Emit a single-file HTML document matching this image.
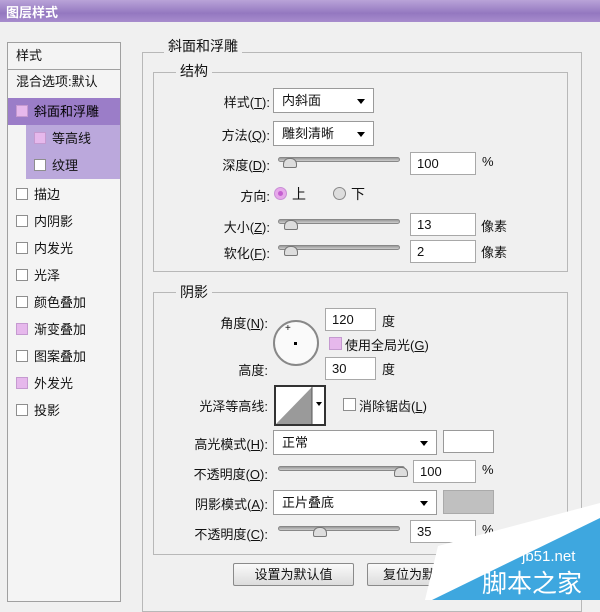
<!DOCTYPE html>
<html><head><meta charset="utf-8"><style>
*{margin:0;padding:0;box-sizing:border-box}
body{width:600px;height:600px;overflow:hidden;background:#f0f0f0;font-family:"Liberation Sans","Noto Sans CJK SC",sans-serif;font-size:13px;color:#111;position:relative}
.a{position:absolute;white-space:nowrap}
.title{left:0;top:0;width:600px;height:22px;background:linear-gradient(#b9a3d8,#9478c0 60%,#a78ccd);color:#fff;font-weight:bold;padding:2px 6px;font-size:13px}
.lp{left:7px;top:42px;width:114px;height:560px;border:1px solid #a0a0a0;background:#f4f4f4}
.row{left:8px;width:112px;height:27px;line-height:27px;padding-left:8px}
.cb{display:inline-block;width:12px;height:12px;border:1px solid #8e8e8e;background:#fff;vertical-align:-1px;margin-right:6px}
.cbp{background:#e6b8ec;border-color:#c59ad0}
.grp{border:1px solid #b8b8b8}
.lg{background:#f0f0f0;padding:0 4px}
.inp{background:#fff;border:1px solid #a8a8a8;height:23px;line-height:21px;padding-left:6px}
.dd{background:#fff;border:1px solid #9a9a9a;height:25px;line-height:23px;padding-left:8px}
.dd:after{content:"";position:absolute;right:8px;top:10px;border-left:4px solid transparent;border-right:4px solid transparent;border-top:5px solid #000}
.tr{height:5px;background:linear-gradient(#999,#ccc);border-radius:3px;border:1px solid #888}
.th{width:14px;height:10px;background:#ddd;border:1px solid #777;border-radius:6px 6px 2px 2px}
.lbl{text-align:right;width:120px}
.btn{border:1px solid #8a8a8a;background:linear-gradient(#fafafa,#dcdcdc);height:23px;line-height:21px;text-align:center;border-radius:2px}
</style></head><body>
<div class="a title">图层样式</div>

<div class="a lp"></div>
<div class="a" style="left:8px;top:69px;width:112px;border-top:1px solid #a0a0a0"></div>
<div class="a row" style="top:42px">样式</div>
<div class="a row" style="top:68px">混合选项:默认</div>
<div class="a row" style="top:98px;background:#9b7dc8;color:#000"><span class="cb cbp"></span>斜面和浮雕</div>
<div class="a row" style="top:125px;left:26px;width:94px;background:#bba8dc"><span class="cb cbp"></span>等高线</div>
<div class="a row" style="top:152px;left:26px;width:94px;background:#bba8dc"><span class="cb"></span>纹理</div>
<div class="a row" style="top:181px"><span class="cb"></span>描边</div>
<div class="a row" style="top:208px"><span class="cb"></span>内阴影</div>
<div class="a row" style="top:235px"><span class="cb"></span>内发光</div>
<div class="a row" style="top:262px"><span class="cb"></span>光泽</div>
<div class="a row" style="top:289px"><span class="cb"></span>颜色叠加</div>
<div class="a row" style="top:316px"><span class="cb cbp"></span>渐变叠加</div>
<div class="a row" style="top:343px"><span class="cb"></span>图案叠加</div>
<div class="a row" style="top:370px"><span class="cb cbp"></span>外发光</div>
<div class="a row" style="top:397px"><span class="cb"></span>投影</div>

<div class="a grp" style="left:142px;top:52px;width:440px;height:560px"></div>
<div class="a lg" style="left:164px;top:36px;font-size:14px">斜面和浮雕</div>
<div class="a grp" style="left:153px;top:72px;width:415px;height:200px"></div>
<div class="a lg" style="left:176px;top:61px;font-size:14px">结构</div>

<div class="a lbl" style="left:150px;top:92px">样式(<u>T</u>):</div>
<div class="a dd" style="left:273px;top:88px;width:101px">内斜面</div>
<div class="a lbl" style="left:150px;top:125px">方法(<u>Q</u>):</div>
<div class="a dd" style="left:273px;top:121px;width:101px">雕刻清晰</div>

<div class="a lbl" style="left:150px;top:155px">深度(<u>D</u>):</div>
<div class="a tr" style="left:278px;top:157px;width:122px"></div>
<div class="a th" style="left:283px;top:158px"></div>
<div class="a inp" style="left:410px;top:152px;width:66px">100</div>
<div class="a" style="left:482px;top:154px">%</div>

<div class="a lbl" style="left:150px;top:186px">方向:</div>
<div class="a" style="left:274px;top:187px;width:13px;height:13px;border-radius:50%;background:#e6a8ea;border:1px solid #c98fd6"></div>
<div class="a" style="left:278px;top:191px;width:5px;height:5px;border-radius:50%;background:#c45fd0"></div>
<div class="a" style="left:292px;top:184px;font-size:14px">上</div>
<div class="a" style="left:333px;top:187px;width:13px;height:13px;border-radius:50%;background:#ddd;border:1px solid #888"></div>
<div class="a" style="left:351px;top:184px;font-size:14px">下</div>

<div class="a lbl" style="left:150px;top:217px">大小(<u>Z</u>):</div>
<div class="a tr" style="left:278px;top:219px;width:122px"></div>
<div class="a th" style="left:284px;top:220px"></div>
<div class="a inp" style="left:410px;top:213px;width:66px">13</div>
<div class="a" style="left:481px;top:216px">像素</div>

<div class="a lbl" style="left:150px;top:243px">软化(<u>F</u>):</div>
<div class="a tr" style="left:278px;top:245px;width:122px"></div>
<div class="a th" style="left:284px;top:246px"></div>
<div class="a inp" style="left:410px;top:240px;width:66px">2</div>
<div class="a" style="left:481px;top:242px">像素</div>

<div class="a grp" style="left:153px;top:292px;width:415px;height:263px"></div>
<div class="a lg" style="left:176px;top:282px;font-size:14px">阴影</div>

<div class="a lbl" style="left:148px;top:313px">角度(<u>N</u>):</div>
<div class="a" style="left:273px;top:320px;width:46px;height:46px;border-radius:50%;border:2px solid #888;background:#fafafa"></div>
<div class="a" style="left:294px;top:342px;width:3px;height:3px;background:#000"></div>
<div class="a" style="left:285px;top:323px;font-size:10px">+</div>
<div class="a inp" style="left:325px;top:308px;width:51px">120</div>
<div class="a" style="left:382px;top:311px">度</div>
<div class="a cb cbp" style="left:329px;top:337px;width:13px;height:13px"></div>
<div class="a" style="left:345px;top:335px">使用全局光(<u>G</u>)</div>
<div class="a lbl" style="left:148px;top:360px">高度:</div>
<div class="a inp" style="left:325px;top:357px;width:51px">30</div>
<div class="a" style="left:382px;top:359px">度</div>

<div class="a lbl" style="left:148px;top:396px">光泽等高线:</div>
<div class="a" style="left:274px;top:385px;width:52px;height:41px;border:2px solid #333;background:#fff"></div>
<svg class="a" style="left:276px;top:387px" width="48" height="37"><polygon points="0,37 36,0 36,37" fill="#9a9a9a"/><line x1="36" y1="0" x2="36" y2="37" stroke="#555"/><polygon points="40,15 46,15 43,19" fill="#000"/></svg>
<div class="a cb" style="left:343px;top:398px;width:13px;height:13px"></div>
<div class="a" style="left:359px;top:396px">消除锯齿(<u>L</u>)</div>

<div class="a lbl" style="left:148px;top:434px">高光模式(<u>H</u>):</div>
<div class="a dd" style="left:273px;top:430px;width:164px">正常</div>
<div class="a" style="left:443px;top:430px;width:51px;height:23px;background:#fff;border:1px solid #999"></div>

<div class="a lbl" style="left:148px;top:464px">不透明度(<u>O</u>):</div>
<div class="a tr" style="left:278px;top:466px;width:127px"></div>
<div class="a th" style="left:394px;top:467px"></div>
<div class="a inp" style="left:413px;top:460px;width:63px">100</div>
<div class="a" style="left:482px;top:462px">%</div>

<div class="a lbl" style="left:148px;top:494px">阴影模式(<u>A</u>):</div>
<div class="a dd" style="left:273px;top:490px;width:164px">正片叠底</div>
<div class="a" style="left:443px;top:490px;width:51px;height:24px;background:#c0c0c0;border:1px solid #aaa"></div>

<div class="a lbl" style="left:148px;top:524px">不透明度(<u>C</u>):</div>
<div class="a tr" style="left:278px;top:526px;width:122px"></div>
<div class="a th" style="left:313px;top:527px"></div>
<div class="a inp" style="left:410px;top:520px;width:66px">35</div>
<div class="a" style="left:482px;top:522px">%</div>

<div class="a btn" style="left:233px;top:563px;width:121px">设置为默认值</div>
<div class="a btn" style="left:367px;top:563px;width:110px">复位为默认值</div>

<svg class="a" style="left:0;top:0" width="600" height="600"><polygon points="438,546 600,503 600,520 432,600 425,600" fill="#fff"/><polygon points="432,600 600,518 600,600" fill="#3ea7df"/></svg>
<div class="a" style="left:522px;top:548px;color:#fff;font-size:15px">jb51.net</div>
<div class="a" style="left:482px;top:569px;color:#fff;font-size:25px;line-height:30px">脚本之家</div>
</body></html>
